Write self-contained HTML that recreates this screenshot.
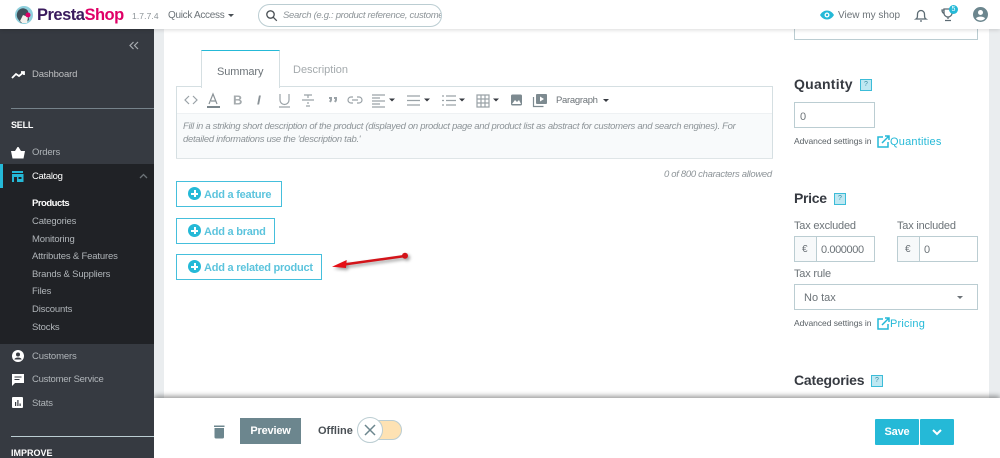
<!DOCTYPE html>
<html><head><meta charset="utf-8"><style>
html,body{margin:0;padding:0;width:1000px;height:458px;overflow:hidden;background:#fff}
body{font-family:"Liberation Sans",sans-serif;color:#363a41}
#w{position:relative;width:1000px;height:458px;overflow:hidden;background:#fff;filter:blur(.3px)}
.b{position:absolute}
.t{position:absolute;white-space:nowrap;line-height:14px}
svg{position:absolute;overflow:visible}
.sub{color:#b0b5b9;font-size:9.5px;left:32px;letter-spacing:-.17px}
.btn{position:absolute;left:176px;height:24px;border:1px solid #45bfdc;background:#fff;box-sizing:content-box}
.btn span{position:absolute;left:27px;top:5px;font-size:11px;font-weight:bold;color:#5cc4dd;white-space:nowrap;letter-spacing:-.23px;line-height:14px}
.plus{position:absolute;left:11px;top:5px;width:13px;height:13px;border-radius:50%;background:#25b9d7}
.plus:before{content:"";position:absolute;left:3px;top:5.5px;width:7px;height:2px;background:#fff}
.plus:after{content:"";position:absolute;left:5.5px;top:3px;width:2px;height:7px;background:#fff}
.h{font-size:14px;font-weight:bold;color:#363a41}
.q{position:absolute;width:10px;height:10px;border:1px solid #3cbcd8;background:#bfe8f2;color:#3a8ea5;font-size:7px;line-height:10px;text-align:center}
.inp{position:absolute;border:1px solid #bbcdd2;background:#fff;box-sizing:border-box}
.lab{font-size:11px;color:#6c7378;letter-spacing:-.2px}
.adv{font-size:8.5px;color:#5a6166;letter-spacing:-.05px}
.lnk{font-size:11px;color:#25b9d7;letter-spacing:.2px}
.ph{font-size:9.5px;font-style:italic;color:#8d9498;letter-spacing:-.31px}
.side{font-size:9.5px;color:#b0b5b9;letter-spacing:-.15px;left:32px}
</style></head><body><div id="w">

<!-- main backgrounds -->
<div class="b" style="left:154px;top:0;width:10px;height:458px;background:#eaedef"></div>
<div class="b" style="left:989px;top:0;width:11px;height:458px;background:#eaedef"></div>

<!-- tabs -->
<div class="b" style="left:201px;top:50px;width:77px;height:37px;border:1px solid #d5dfe2;border-top:1px solid #25b9d7;border-bottom:0;background:#fff;z-index:2"></div>
<div class="t" style="left:217px;top:65px;font-size:11px;color:#6c7378;z-index:3;letter-spacing:-.1px">Summary</div>
<div class="t" style="left:293px;top:63px;font-size:11px;color:#a4aaad">Description</div>

<!-- editor -->
<div class="b" style="left:176px;top:86px;width:597px;height:72px;border:1px solid #d5dfe2;box-sizing:border-box;background:#fff;box-shadow:0 1px 0 #dfe5e7"></div>
<div class="b" style="left:177px;top:113px;width:595px;height:44px;background:#f8fafb;border-top:1px solid #eef1f3"></div>
<svg style="left:176px;top:86px" width="450" height="30" fill="none" stroke="#9aa2a7" stroke-width="1.2">
<path d="M13 10l-4 4 4 4M17 10l4 4-4 4"/>
<path d="M33 18l4-10 4 10M35 15h5" stroke="#8a9297"/><path d="M31 21h13" stroke="#7b868c" stroke-width="2"/>
<text x="57" y="18.500" font-family="Liberation Sans" font-size="13" font-weight="bold" fill="#a4aaad" stroke="none">B</text>
<text x="81" y="18.500" font-family="Liberation Sans" font-size="13" font-weight="bold" font-style="italic" fill="#8a9297" stroke="none">I</text>
<path d="M104 8v6a4.500 4.500 0 0 0 9 0V8M103 21h11"/>
<path d="M126 14h12M128 9h8M132 9v3M132 16v2M130 20h4"/>
<path d="M153 12h2v2l-1 2M158 12h2v2l-1 2" stroke-width="2"/>
<path d="M177 11h-2a3 3 0 0 0 0 6h2M181 11h2a3 3 0 0 1 0 6h-2M176 14h6"/>
<path d="M196 9h13M196 12h8M196 15h13M196 18h8M196 21h13"/>
<path d="M213 12.500l3 3 3-3z" fill="#363a41" stroke="none"/>
<path d="M231 10h13M231 14.500h13M231 19h13"/>
<path d="M248 12.500l3 3 3-3z" fill="#363a41" stroke="none"/>
<path d="M266 10h2M266 14.500h2M266 19h2M270 10h10M270 14.500h10M270 19h10"/>
<path d="M283 12.500l3 3 3-3z" fill="#363a41" stroke="none"/>
<path d="M301 9h12v12h-12zM305 9v12M309 9v12M301 13h12M301 17h12"/>
<path d="M317 12.500l3 3 3-3z" fill="#363a41" stroke="none"/>
<rect x="335" y="8.500" width="11" height="11" rx="1.500" fill="#7d8a90" stroke="none"/><path d="M336 18l3-4 2 2 2-2 2 4z" fill="#fff" stroke="none"/>
<path d="M357.500 11v9.500h10" stroke="#7d8a90"/><rect x="360" y="8" width="11" height="10" rx="1" fill="#7d8a90" stroke="none"/><path d="M364 10.500v5l4-2.500z" fill="#fff" stroke="none"/>
</svg>
<div class="t" style="left:556px;top:94px;font-size:9.5px;color:#6c7378;letter-spacing:-.3px">Paragraph</div>
<div class="b" style="left:603px;top:99px;border:3px solid transparent;border-top:3px solid #363a41"></div>
<div class="t ph" style="left:183px;top:120px">Fill in a striking short description of the product (displayed on product page and product list as abstract for customers and search engines). For</div>
<div class="t ph" style="left:183px;top:133px">detailed informations use the 'description tab.'</div>
<div class="t ph" style="left:664px;top:168px">0 of 800 characters allowed</div>

<!-- add buttons -->
<div class="btn" style="top:181px;width:104px"><i class="plus"></i><span style="top:6px">Add a feature</span></div>
<div class="btn" style="top:218px;width:97px"><i class="plus"></i><span style="top:6px">Add a brand</span></div>
<div class="btn" style="top:254px;width:144px"><i class="plus"></i><span style="top:6px">Add a related product</span></div>

<!-- arrow -->
<svg style="left:320px;top:245px;filter:drop-shadow(2px 2px 1.500px rgba(0,0,0,.4))" width="100" height="35">
<path d="M24 19.500L85 11" stroke="#d3141a" stroke-width="2.500"/>
<path d="M12 21.700L26.700 15 26 23z" fill="#e50f16"/>
<circle cx="85" cy="10.700" r="3" fill="#d3141a"/>
</svg>

<!-- right column -->
<div class="inp" style="left:794px;top:20px;width:184px;height:20px"></div>
<div class="t h" style="left:794px;top:77px;letter-spacing:.25px">Quantity</div>
<div class="q" style="left:860px;top:79px">?</div>
<div class="inp" style="left:794px;top:102px;width:81px;height:26px"></div>
<div class="t" style="left:800px;top:110px;font-size:11px;color:#6c7378">0</div>
<div class="t adv" style="left:794px;top:134px">Advanced settings in</div>
<svg style="left:877px;top:135px" width="13" height="13" fill="none" stroke="#25b9d7" stroke-width="1.500"><path d="M6 2H1v10h10V7M5 8l7-7M8 1h4v4"/></svg>
<div class="t lnk" style="left:890px;top:135px">Quantities</div>

<div class="t h" style="left:794px;top:191px;letter-spacing:-.3px">Price</div>
<div class="q" style="left:834px;top:193px">?</div>
<div class="t lab" style="left:794px;top:219px">Tax excluded</div>
<div class="t lab" style="left:897px;top:219px">Tax included</div>
<div class="inp" style="left:794px;top:236px;width:81px;height:26px"></div>
<div class="b" style="left:795px;top:237px;width:21px;height:24px;background:#f7f9fa;border-right:1px solid #bbcdd2"></div>
<div class="t" style="left:802px;top:243px;font-size:10px;color:#6c7378">€</div>
<div class="t" style="left:821px;top:243px;font-size:11px;color:#6c7378;letter-spacing:-.4px">0.000000</div>
<div class="inp" style="left:897px;top:236px;width:81px;height:26px"></div>
<div class="b" style="left:898px;top:237px;width:21px;height:24px;background:#f7f9fa;border-right:1px solid #bbcdd2"></div>
<div class="t" style="left:905px;top:243px;font-size:10px;color:#6c7378">€</div>
<div class="t" style="left:924px;top:243px;font-size:11px;color:#6c7378">0</div>
<div class="t lab" style="left:794px;top:267px">Tax rule</div>
<div class="inp" style="left:794px;top:284px;width:184px;height:26px"></div>
<div class="t" style="left:804px;top:291px;font-size:11px;color:#6c7378">No tax</div>
<div class="b" style="left:957px;top:296px;border:3px solid transparent;border-top:3px solid #6c7378"></div>
<div class="t adv" style="left:794px;top:316px">Advanced settings in</div>
<svg style="left:877px;top:317px" width="13" height="13" fill="none" stroke="#25b9d7" stroke-width="1.500"><path d="M6 2H1v10h10V7M5 8l7-7M8 1h4v4"/></svg>
<div class="t lnk" style="left:890px;top:317px">Pricing</div>
<div class="t h" style="left:794px;top:373px;letter-spacing:-.2px">Categories</div>
<div class="q" style="left:871px;top:375px">?</div>

<!-- footer -->
<div class="b" style="left:154px;top:398px;width:846px;height:60px;background:#fff;box-shadow:0 -2px 5px rgba(0,0,0,.4);z-index:5"></div>
<svg style="left:213px;top:425px;z-index:6" width="12" height="14" fill="#6c868e"><path d="M1.500 3h9.500v9a1.500 1.500 0 0 1-1.500 1.500H3A1.500 1.500 0 0 1 1.500 12zM1 .500h10.500v1.500H1z"/></svg>
<div class="b" style="left:240px;top:418px;width:61px;height:26px;background:#6c868e;z-index:6;color:#fff;font-size:11px;font-weight:bold;text-align:center;line-height:26px;letter-spacing:-.2px">Preview</div>
<div class="t" style="left:318px;top:424px;font-size:11px;font-weight:bold;color:#4a5055;z-index:6">Offline</div>
<div class="b" style="left:366px;top:420px;width:36px;height:20px;border-radius:10px;background:#fee2b3;border:1px solid #bbcdd2;box-sizing:border-box;z-index:6"></div>
<div class="b" style="left:357px;top:417px;width:26px;height:26px;border-radius:50%;background:#fff;border:1px solid #bbcdd2;box-sizing:border-box;z-index:7"></div>
<svg style="left:364px;top:424px;z-index:8" width="12" height="12" fill="none" stroke="#6c868e" stroke-width="1.500"><path d="M1 1l10 10M11 1L1 11"/></svg>
<div class="b" style="left:875px;top:419px;width:44px;height:26px;background:#25b9d7;border-radius:1px;z-index:6;color:#fff;font-size:11px;font-weight:bold;text-align:center;line-height:26px;letter-spacing:-.2px">Save</div>
<div class="b" style="left:920px;top:419px;width:34px;height:26px;background:#25b9d7;border-radius:1px;z-index:6"></div>
<svg style="left:932px;top:429px;z-index:7" width="10" height="7" fill="none" stroke="#fff" stroke-width="2"><path d="M1 1l4 4 4-4"/></svg>

<!-- sidebar -->
<div class="b" style="left:0;top:29px;width:154px;height:429px;background:#363a41;z-index:9"></div>
<div class="b" style="left:0;top:164px;width:154px;height:180px;background:#202226;z-index:9"></div>
<div class="b" style="left:0;top:164px;width:3px;height:24px;background:#25b9d7;z-index:10"></div>
<div class="b" style="left:11px;top:108px;width:143px;height:1px;background:#76828a;z-index:10"></div>
<div class="b" style="left:11px;top:436px;width:143px;height:1px;background:#bbcdd2;z-index:10"></div>
<div style="position:absolute;left:0;top:0;width:154px;height:458px;z-index:11">
<svg style="left:129px;top:41px" width="10" height="9" fill="none" stroke="#a8acb0" stroke-width="1.200"><path d="M4.500 1L1 4.500 4.500 8M9 1L5.500 4.500 9 8"/></svg>
<svg style="left:12px;top:71px" width="13" height="8" fill="none" stroke="#fff" stroke-width="1.800"><path d="M0 7l4-4 3 2 5-4M9 1h3v3"/></svg>
<div class="t side" style="top:68px;color:#bebfc1;letter-spacing:-.13px">Dashboard</div>
<div class="t" style="left:11px;top:118px;font-size:9px;font-weight:bold;color:#fff;letter-spacing:-.2px">SELL</div>
<svg style="left:11px;top:146px" width="14" height="13" fill="#fff"><path d="M0 5h14l-1.500 7.500h-11zM4 5l2.500-4h1L10 5"/></svg>
<div class="t side" style="top:146px">Orders</div>
<svg style="left:12px;top:171px" width="12" height="11" fill="#25b9d7"><path d="M0 0h11v2H0zM0 3h11.500v8H0z"/><path d="M2 6h3v5H2zM6.500 6h3v2h-3z" fill="#202226"/></svg>
<div class="t side" style="top:170px;color:#fff;letter-spacing:-.3px">Catalog</div>
<svg style="left:139px;top:173px" width="9" height="6" fill="none" stroke="#6c7378" stroke-width="1.300"><path d="M1 5l3.500-3.500L8 5"/></svg>
<div class="t sub" style="top:197px;color:#fff;font-weight:bold;letter-spacing:-.5px">Products</div>
<div class="t sub" style="top:215px">Categories</div>
<div class="t sub" style="top:233px">Monitoring</div>
<div class="t sub" style="top:250px">Attributes &amp; Features</div>
<div class="t sub" style="top:268px">Brands &amp; Suppliers</div>
<div class="t sub" style="top:285px">Files</div>
<div class="t sub" style="top:303px">Discounts</div>
<div class="t sub" style="top:321px">Stocks</div>
<svg style="left:12px;top:350px" width="12" height="12"><circle cx="6" cy="6" r="6" fill="#fff"/><circle cx="6" cy="4.500" r="2" fill="#363a41"/><path d="M2.500 9c1-2 6-2 7 0v.5h-7z" fill="#363a41"/></svg>
<div class="t side" style="top:350px">Customers</div>
<svg style="left:12px;top:374px" width="12" height="12" fill="#fff"><path d="M0 0h12v9H3l-3 3z"/><path d="M2.500 2.500h7v1h-7zM2.500 5h5v1h-5z" fill="#363a41"/></svg>
<div class="t side" style="top:373px;letter-spacing:-.25px">Customer Service</div>
<svg style="left:12px;top:397px" width="12" height="12" fill="#fff"><rect width="11" height="11" rx="1"/><path d="M3 5h1.200v4H3zM5.300 3h1.200v6H5.300zM7.500 6.500h1.200V9H7.500z" fill="#363a41"/></svg>
<div class="t side" style="top:397px">Stats</div>
<div class="t" style="left:11px;top:446px;font-size:9px;font-weight:bold;color:#fff">IMPROVE</div>
</div>

<!-- header -->
<div class="b" style="left:0;top:0;width:1000px;height:29px;background:#fff;box-shadow:0 1px 4px rgba(0,0,0,.15);z-index:12"></div>
<div style="position:absolute;left:0;top:0;width:1000px;height:29px;z-index:13">
<svg style="left:15px;top:6px" width="18" height="18"><circle cx="9" cy="9" r="9" fill="#8fd0dd"/><path d="M3 13a6 6.500 0 0 1 10-8l1 9-4 3H6z" fill="#40505a"/><path d="M5 15l3-6 5 2-1 6H7z" fill="#f4f1ec"/><circle cx="13" cy="9" r="2.500" fill="#df0067"/></svg>
<div class="t" style="left:37px;top:6px;font-size:16.500px;line-height:18px;font-weight:bold;color:#3a1b5d;letter-spacing:-.5px">Presta<span style="color:#df0067">Shop</span></div>
<div class="t" style="left:132px;top:9px;font-size:8.500px;color:#8d9498;letter-spacing:.1px">1.7.7.4</div>
<div class="t" style="left:168px;top:9px;font-size:10px;color:#6c7378;letter-spacing:-.3px">Quick Access</div>
<div class="b" style="left:228px;top:14px;border:3px solid transparent;border-top:3px solid #4a5055"></div>
<div class="b" style="left:258px;top:4px;width:184px;height:23px;border:1px solid #bbcdd2;border-radius:12px;box-sizing:border-box;overflow:hidden">
<div class="t ph" style="left:24px;top:4px">Search (e.g.: product reference, custome</div></div>
<svg style="left:266px;top:10px" width="11" height="11" fill="none" stroke="#4a5055" stroke-width="1.300"><circle cx="4.500" cy="4.500" r="3.700"/><path d="M7.300 7.300l3.500 3.500"/></svg>
<svg style="left:820px;top:10px" width="14" height="10"><path d="M0 5c3.500-6 10.500-6 14 0-3.500 6-10.500 6-14 0z" fill="#25b9d7"/><circle cx="7" cy="5" r="2.500" fill="#fff"/><circle cx="7" cy="5" r="1.200" fill="#25b9d7"/></svg>
<div class="t" style="left:838px;top:9px;font-size:10px;color:#6c7378">View my shop</div>
<svg style="left:915px;top:8px" width="12" height="14" fill="none" stroke="#5c6b73" stroke-width="1.300"><path d="M1 11c1.500-1 1.500-2 1.500-5a3.500 3.500 0 0 1 7 0c0 3 0 4 1.500 5zM5 13h2"/></svg>
<svg style="left:941px;top:7px" width="14" height="15" fill="none" stroke="#5c6b73" stroke-width="1.300"><path d="M3 2h8v4a4 4 0 0 1-8 0zM3 3H1c0 2 1 3 2 3.500M11 3h2c0 2-1 3-2 3.500M7 10v2M4 13.500h6"/></svg>
<div class="b" style="left:949px;top:5px;width:9px;height:9px;border-radius:50%;background:#25b9d7;color:#fff;font-size:7px;line-height:9px;text-align:center">5</div>
<svg style="left:973px;top:7px" width="15" height="15"><circle cx="7.500" cy="7.500" r="7.500" fill="#6c868e"/><circle cx="7.500" cy="5.500" r="2.500" fill="#fff"/><path d="M3 11.500c1-2.500 8-2.500 9 0a6 6 0 0 1-9 0z" fill="#fff"/></svg>
</div>
</div></body></html>
